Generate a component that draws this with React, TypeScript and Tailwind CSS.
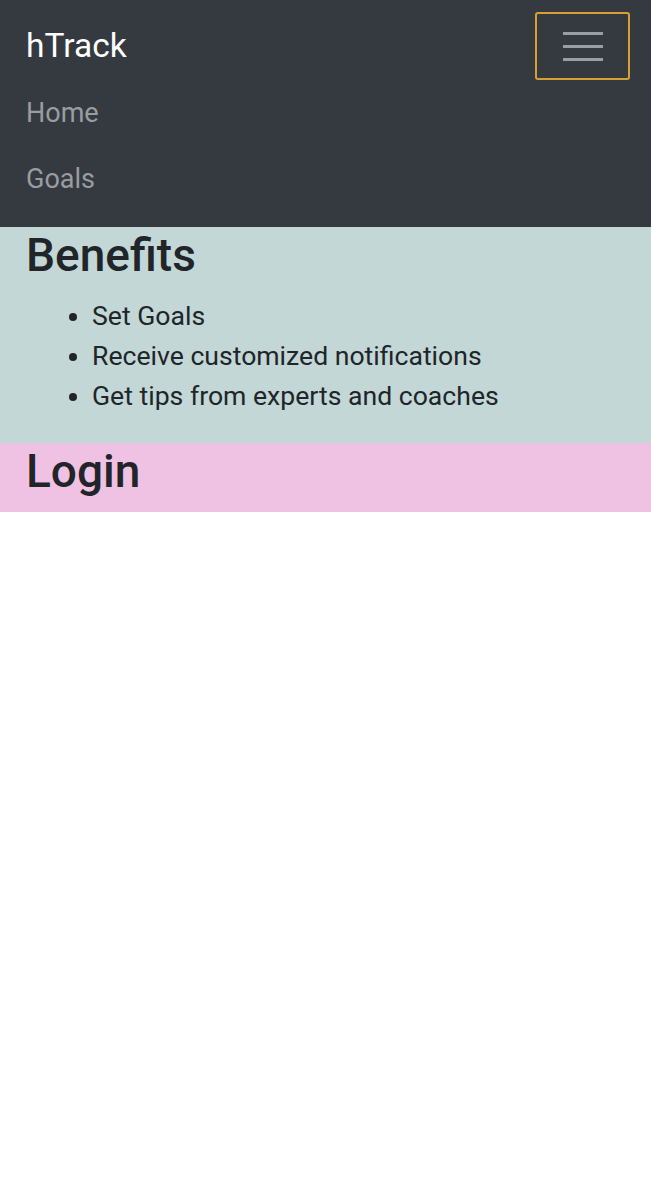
export default function App() {
  const benefits = ['Set Goals', 'Receive customized notifications', 'Get tips from experts and coaches']

  return (
    <div className="min-h-[1190px] bg-white font-['Roboto','Liberation_Sans',sans-serif] text-[#212529]">
      <nav className="bg-[#343a40] px-[26px] pt-[12px] pb-[14px]">
        <div className="flex items-center justify-between">
          <a className="text-[33.5px] leading-[48px] text-white">hTrack</a>
          <button className="-mr-[5px] flex h-[68px] w-[95px] flex-col items-center justify-center gap-[10px] rounded-[3px] border-2 border-[#d6a133]">
            <span className="block h-[3px] w-[40px] bg-[#9a9da1]" />
            <span className="block h-[3px] w-[40px] bg-[#9a9da1]" />
            <span className="block h-[3px] w-[40px] bg-[#9a9da1]" />
          </button>
        </div>
        <ul className="flex flex-col">
          <li className="py-[13px] text-[27px] leading-[40px] text-[#9a9da0]">Home</li>
          <li className="py-[13px] text-[27px] leading-[41px] text-[#9a9da0]">Goals</li>
        </ul>
      </nav>

      <section className="bg-[#c2d7d6] px-[26px] pb-[27px]">
        <h2 className="mb-[13px] text-[46px] font-medium leading-[56px]">Benefits</h2>
        <ul className="list-disc pl-[66px]">
          {benefits.map((item) => (
            <li key={item} className="text-[26.6px] leading-[40px]">{item}</li>
          ))}
        </ul>
      </section>

      <section className="bg-[#efc1e2] px-[26px] pb-[13px]">
        <h2 className="text-[46px] font-medium leading-[56px]">Login</h2>
      </section>
    </div>
  )
}
